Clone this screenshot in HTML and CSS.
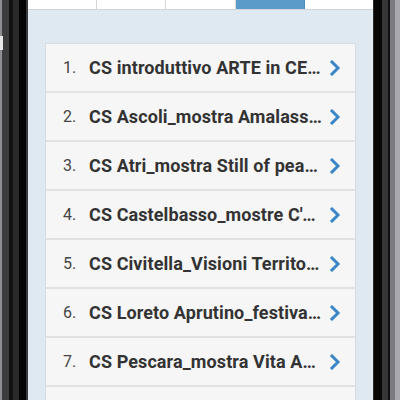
FILE: index.html
```
<!DOCTYPE html>
<html>
<head>
<meta charset="utf-8">
<link rel="stylesheet" href="styles.css">
</head>
<body>
<div class="phone">
  <div class="bezel bezel-left"><span class="btn"></span></div>
  <div class="screen">
    <div class="tabs">
      <div class="tab"></div>
      <div class="tab"></div>
      <div class="tab"></div>
      <div class="tab active"></div>
      <div class="tab"></div>
    </div>
    <div class="content">
      <ul class="list">
        <li class="row"><span class="num">1.</span><span class="title">CS introduttivo ARTE in CENTRO</span><svg class="chev" viewBox="0 0 12 16"><polyline points="3,2 9,8 3,14"/></svg></li>
        <li class="row"><span class="num">2.</span><span class="title">CS Ascoli_mostra Amalassunta</span><svg class="chev" viewBox="0 0 12 16"><polyline points="3,2 9,8 3,14"/></svg></li>
        <li class="row"><span class="num">3.</span><span class="title">CS Atri_mostra Still of peace and war</span><svg class="chev" viewBox="0 0 12 16"><polyline points="3,2 9,8 3,14"/></svg></li>
        <li class="row"><span class="num">4.</span><span class="title">CS Castelbasso_mostre C'era una volta</span><svg class="chev" viewBox="0 0 12 16"><polyline points="3,2 9,8 3,14"/></svg></li>
        <li class="row"><span class="num">5.</span><span class="title">CS Civitella_Visioni Territoriali</span><svg class="chev" viewBox="0 0 12 16"><polyline points="3,2 9,8 3,14"/></svg></li>
        <li class="row"><span class="num">6.</span><span class="title">CS Loreto Aprutino_festival Arte</span><svg class="chev" viewBox="0 0 12 16"><polyline points="3,2 9,8 3,14"/></svg></li>
        <li class="row"><span class="num">7.</span><span class="title">CS Pescara_mostra Vita Activa</span><svg class="chev" viewBox="0 0 12 16"><polyline points="3,2 9,8 3,14"/></svg></li>
        <li class="row"><span class="num">8.</span><span class="title">CS Teramo_mostra</span><svg class="chev" viewBox="0 0 12 16"><polyline points="3,2 9,8 3,14"/></svg></li>
      </ul>
    </div>
  </div>
  <div class="bezel bezel-right"></div>
</div>
</body>
</html>
```
FILE: styles.css
```
html, body {
  margin: 0;
  padding: 0;
  width: 400px;
  height: 400px;
  overflow: hidden;
  font-family: Roboto, "Liberation Sans", sans-serif;
}
.phone {
  display: flex;
  width: 400px;
  height: 400px;
}
.bezel {
  height: 400px;
  position: relative;
  flex: none;
}
.bezel-left {
  width: 28px;
  background: linear-gradient(to right, #8e8e94 0, #8e8e94 2px, #3c3c3c 2px, #3c3c3c 9px, #121212 9px, #121212 13px, #2a2a2a 13px, #2a2a2a 19px, #050505 19px, #050505 26px, #3a3a3a 26px, #3a3a3a 28px);
}
.btn {
  position: absolute;
  left: 0;
  top: 36px;
  width: 3px;
  height: 14px;
  background: #e8e8e8;
}
.bezel-right {
  width: 27px;
  background: linear-gradient(to right, #2a2a2a 0, #2a2a2a 1px, #060606 1px, #060606 9px, #363636 9px, #363636 15px, #101010 15px, #101010 17px, #7a7a80 17px, #7a7a80 22px, #a8a8ae 22px);
}
.screen {
  width: 345px;
  height: 400px;
  flex: none;
  background: #dfe9f1;
  display: flex;
  flex-direction: column;
  overflow: hidden;
}
.tabs {
  display: flex;
  flex: none;
  height: 9px;
  border-bottom: 1px solid #cfd6dc;
  background: #fff;
}
.tab {
  flex: 1;
  border-right: 1px solid #d8d8d8;
}
.tab:last-child {
  border-right: none;
}
.tab.active {
  background: #5b9bc9;
  border-right-color: #4f8cb8;
}
.content {
  flex: none;
  padding: 33px 17px 0 17px;
}
.list {
  list-style: none;
  margin: 0;
  padding: 0;
  border: 1px solid #dadde0;
  border-bottom: none;
  background: #f6f6f6;
}
.row {
  display: flex;
  align-items: center;
  height: 47px;
  border-bottom: 2px solid #e2e2e2;
  padding-left: 17px;
  padding-right: 14px;
}
.num {
  width: 26px;
  flex: none;
  font-size: 16px;
  color: #444;
}
.title {
  flex: 1;
  min-width: 0;
  font-size: 18px;
  letter-spacing: 0.1px;
  font-weight: bold;
  color: #333;
  white-space: nowrap;
  overflow: hidden;
  text-overflow: ellipsis;
  padding-right: 5px;
}
.chev {
  width: 12px;
  height: 16px;
  flex: none;
}
.chev polyline {
  fill: none;
  stroke: #3a86c6;
  stroke-width: 3;
  stroke-linecap: square;
}
```
